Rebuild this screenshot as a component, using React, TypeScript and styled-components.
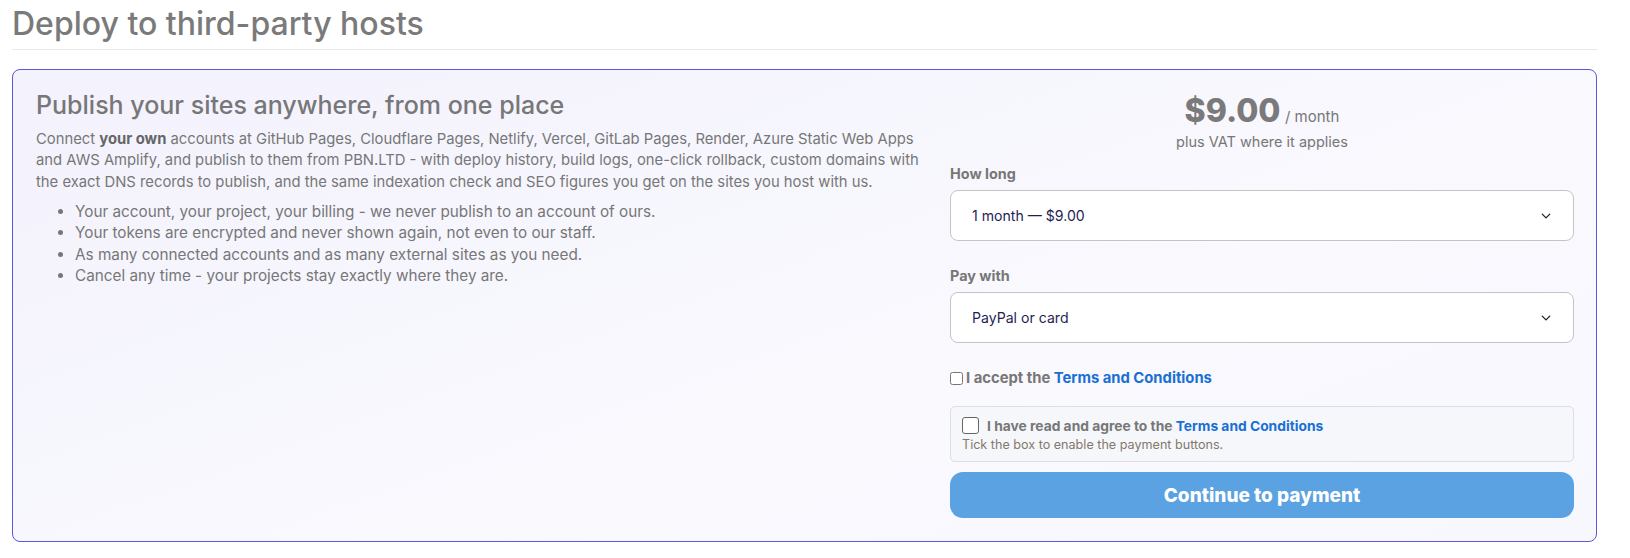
import React from 'react';
import styled, { createGlobalStyle } from 'styled-components';

const GlobalStyle = createGlobalStyle`
  body {
    margin: 0;
    background: #fff;
    font-family: Inter, "Open Sans", sans-serif;
    color: #777;
  }
`;

const Page = styled.div`
  width: 1585px;
  padding: 4px 0 0 12px;
`;

const PageTitle = styled.h1`
  margin: 0;
  padding-bottom: 6px;
  font-size: 32px;
  font-weight: 500;
  color: #7a7a7a;
  border-bottom: 1px solid #e9e9e9;
`;

const Card = styled.section`
  margin-top: 19px;
  display: grid;
  grid-template-columns: 1fr 624px;
  gap: 26px;
  padding: 20px 22px 23px 23px;
  border: 1px solid #5b57e0;
  border-radius: 8px;
  background: linear-gradient(160deg, #f3f2fd 0%, #f9f9fe 60%, #f7f7fe 100%);
`;

const Intro = styled.div`
  display: flex;
  flex-direction: column;
`;

const CardTitle = styled.h2`
  margin: 0 0 9px;
  font-size: 25px;
  font-weight: 500;
  color: #777;
`;

const Paragraph = styled.p`
  margin: 0;
  font-size: 14.8px;
  line-height: 21.4px;
  color: #777;

  strong {
    color: #666;
    font-weight: 700;
  }
`;

const Bullets = styled.ul`
  margin: 8px 0 0;
  padding-left: 39px;
  font-size: 15.3px;
  line-height: 21.2px;
  color: #777;
`;

const Checkout = styled.div`
  display: flex;
  flex-direction: column;
`;

const Price = styled.div`
  text-align: center;
  line-height: 1;
  margin-top: 5px;
`;

const Amount = styled.span`
  font-size: 32px;
  font-weight: 800;
  color: #7a7a7a;
`;

const Per = styled.span`
  font-size: 15px;
  color: #777;
`;

const Note = styled.div`
  margin-top: 6px;
  text-align: center;
  font-size: 14.5px;
  color: #777;
`;

const Label = styled.label<{ $top: number }>`
  display: block;
  margin: ${(p) => p.$top}px 0 8px;
  font-size: 14.4px;
  font-weight: 700;
  color: #777;
`;

const SelectBox = styled.div`
  display: flex;
  align-items: center;
  justify-content: space-between;
  height: 49px;
  padding: 0 22px 0 21px;
  border: 1px solid #c4c4c4;
  border-radius: 8px;
  background: #fff;
  font-size: 14.1px;
  color: #1f1f55;
`;

const Chevron = () => (
  <svg width="10" height="10" viewBox="0 0 16 16" fill="none" stroke="#222" strokeWidth="2.2" strokeLinecap="round" strokeLinejoin="round">
    <path d="M2 5l6 6 6-6" />
  </svg>
);

const AcceptRow = styled.label`
  display: flex;
  align-items: center;
  gap: 3px;
  margin-top: 26px;
  font-size: 14.8px;
  font-weight: 700;
  color: #777;
`;

const SmallBox = styled.input`
  margin: 0;
  width: 13px;
  height: 13px;
`;

const Link = styled.a`
  color: #1a6fd4;
  text-decoration: none;
  font-weight: 700;
`;

const AgreeBox = styled.div`
  margin-top: 19px;
  padding: 10px 11px 9px;
  border: 1px solid #dcdde6;
  border-radius: 5px;
  background: #f5f7fb;
`;

const AgreeRow = styled.label`
  display: flex;
  align-items: center;
  gap: 8px;
  font-size: 13.8px;
  font-weight: 700;
  color: #777;
`;

const BigBox = styled.span`
  display: inline-block;
  width: 15px;
  height: 15px;
  border: 1.5px solid #666;
  border-radius: 3px;
  background: #fff;
`;

const Hint = styled.div`
  margin-top: 3px;
  font-size: 12.6px;
  color: #85776b;
`;

const PayButton = styled.button`
  margin-top: 10px;
  height: 46px;
  border: none;
  border-radius: 13px;
  background: #5aa2e2;
  color: #fff;
  font-family: inherit;
  font-size: 19px;
  font-weight: 800;
`;

export default function App() {
  return (
    <>
      <GlobalStyle />
      <Page>
        <PageTitle>Deploy to third-party hosts</PageTitle>
        <Card>
          <Intro>
            <CardTitle>Publish your sites anywhere, from one place</CardTitle>
            <Paragraph>
              Connect <strong>your own</strong> accounts at GitHub Pages, Cloudflare Pages, Netlify, Vercel, GitLab Pages, Render, Azure Static Web Apps and AWS Amplify, and publish to them from PBN.LTD - with deploy history, build logs, one-click rollback, custom domains with the exact DNS records to publish, and the same indexation check and SEO figures you get on the sites you host with us.
            </Paragraph>
            <Bullets>
              <li>Your account, your project, your billing - we never publish to an account of ours.</li>
              <li>Your tokens are encrypted and never shown again, not even to our staff.</li>
              <li>As many connected accounts and as many external sites as you need.</li>
              <li>Cancel any time - your projects stay exactly where they are.</li>
            </Bullets>
          </Intro>
          <Checkout>
            <Price>
              <Amount>$9.00</Amount> <Per>/ month</Per>
            </Price>
            <Note>plus VAT where it applies</Note>
            <Label $top={15}>How long</Label>
            <SelectBox>
              <span>1 month — $9.00</span>
              <Chevron />
            </SelectBox>
            <Label $top={26}>Pay with</Label>
            <SelectBox>
              <span>PayPal or card</span>
              <Chevron />
            </SelectBox>
            <AcceptRow>
              <SmallBox type="checkbox" />
              <span>
                I accept the <Link href="#">Terms and Conditions</Link>
              </span>
            </AcceptRow>
            <AgreeBox>
              <AgreeRow>
                <BigBox />
                <span>
                  I have read and agree to the <Link href="#">Terms and Conditions</Link>
                </span>
              </AgreeRow>
              <Hint>Tick the box to enable the payment buttons.</Hint>
            </AgreeBox>
            <PayButton>Continue to payment</PayButton>
          </Checkout>
        </Card>
      </Page>
    </>
  );
}
